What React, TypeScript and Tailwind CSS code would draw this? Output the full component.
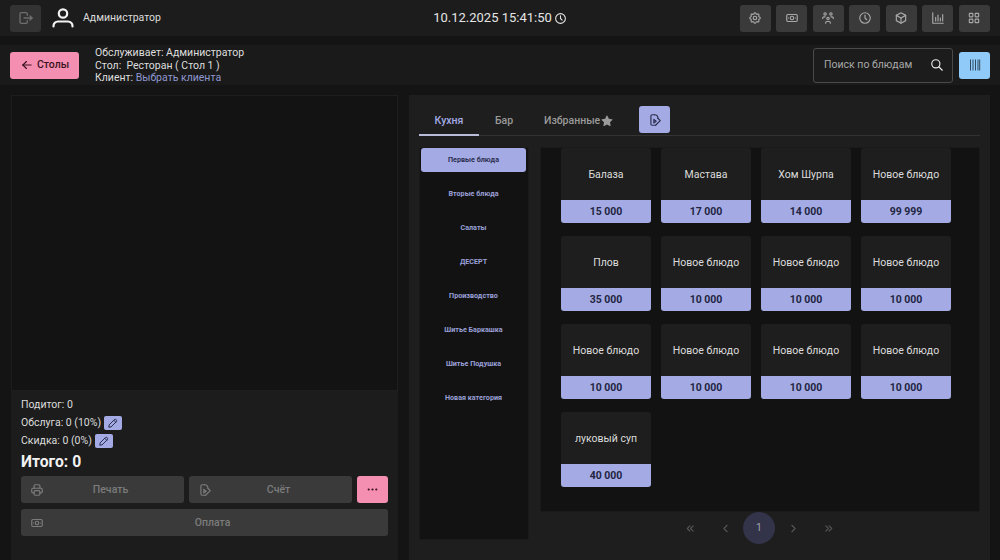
import { TbLogout, TbArrowLeft, TbSettings, TbCashBanknote, TbUsersGroup, TbClock, TbBox, TbLayoutGrid, TbSearch, TbPencil, TbPrinter, TbDots, TbStarFilled, TbChevronsLeft, TbChevronLeft, TbChevronRight, TbChevronsRight } from "react-icons/tb";

const Bill = ({ size = 16 }: { size?: number }) => (
  <svg width={size} height={size} viewBox="0 0 24 24" fill="none" stroke="currentColor" strokeWidth="2" strokeLinecap="round" strokeLinejoin="round">
    <path d="M11 3H7a2 2 0 0 0-2 2v14a2 2 0 0 0 2 2h6" />
    <path d="M11 3a6 6 0 0 1 6 6" />
    <path d="M17 9l4 4-8 8" />
    <path d="M10 11l4 3-4 3z" />
  </svg>
);

const Barcode = () => (
  <svg width="16" height="16" viewBox="0 0 16 16" stroke="currentColor" strokeWidth="1">
    <path d="M3.5 2.5v11M6 2.5v11M8.5 2.5v11M11 2.5v11M12.7 2.5v11" />
  </svg>
);

const Chart = ({ size = 14 }: { size?: number }) => (
  <svg width={size} height={size} viewBox="0 0 24 24" fill="none" stroke="currentColor" strokeWidth="2" strokeLinecap="round" strokeLinejoin="round">
    <path d="M3 3v18h18" />
    <path d="M8 17v-6M12 17V7M16 17v-5M20 17V6" />
  </svg>
);

const UserIcon = () => (
  <svg width="22" height="20" viewBox="0 0 22 20" fill="none" stroke="currentColor" strokeWidth="2.2" strokeLinecap="round">
    <circle cx="11" cy="5.5" r="4.2" />
    <path d="M1.5 18.5v-.5a4.5 4.5 0 0 1 4.5-4.5h10a4.5 4.5 0 0 1 4.5 4.5v.5" />
  </svg>
);

const topIcons = [TbSettings, TbCashBanknote, TbUsersGroup, TbClock, TbBox, Chart, TbLayoutGrid];
const categories = ["Первые блюда", "Вторые блюда", "Салаты", "ДЕСЕРТ", "Производство", "Шитье Баркашка", "Шитье Подушка", "Новая категория"];
const dishes: [string, string][] = [
  ["Балаза", "15 000"], ["Мастава", "17 000"], ["Хом Шурпа", "14 000"], ["Новое блюдо", "99 999"],
  ["Плов", "35 000"], ["Новое блюдо", "10 000"], ["Новое блюдо", "10 000"], ["Новое блюдо", "10 000"],
  ["Новое блюдо", "10 000"], ["Новое блюдо", "10 000"], ["Новое блюдо", "10 000"], ["Новое блюдо", "10 000"],
  ["луковый суп", "40 000"],
];

export default function App() {
  return (
    <div className="h-[560px] w-[1000px] overflow-hidden bg-[#141414] text-[#e0e0e0] font-['Roboto',sans-serif]">
      <header className="flex h-[36px] items-center justify-between bg-[#1c1c1c] pl-[10px] pr-[10px]">
        <div className="flex w-[260px] items-center">
          <div className="flex h-[27px] w-[31px] items-center justify-center rounded-[3px] bg-[#333333] text-[#6e6e6e]"><TbLogout size={16} /></div>
          <span className="ml-[11px] text-[#f2f2f2]"><UserIcon /></span>
          <span className="ml-[9px] text-[10.5px] text-[#dcdcdc]">Администратор</span>
        </div>
        <div className="flex items-center gap-[2px] text-[13px] text-[#e4e4e4]">10.12.2025 15:41:50<TbClock size={13} /></div>
        <div className="flex w-[260px] justify-end gap-[5.5px]">
          {topIcons.map((Icon, i) => (
            <div key={i} className="flex h-[27px] w-[31px] items-center justify-center rounded-[3px] bg-[#3a3a3a] text-[#a8a8a8]"><Icon size={14} /></div>
          ))}
        </div>
      </header>

      <div className="mt-[9px] flex h-[40px] items-center bg-[#1a1a1a] pl-[10px] pr-[10px]">
        <button className="flex h-[27px] w-[69px] items-center justify-center gap-[3px] rounded-[3px] bg-[#f48fb1] text-[10.5px] font-medium text-[#3a1220]"><TbArrowLeft size={14} />Столы</button>
        <div className="ml-[16px] pt-[2px] text-[10.5px] leading-[12.5px] text-[#dedede]">
          <div>Обслуживает: Администратор</div>
          <div>Стол:&nbsp; Ресторан ( Стол 1 )</div>
          <div>Клиент: <span className="text-[#8f97cf]">Выбрать клиента</span></div>
        </div>
        <div className="ml-auto flex h-[35px] w-[140px] items-center justify-between rounded-[3px] border border-[#4a4a4a] bg-[#1c1c1c] pl-[10px] pr-[8px] text-[10.5px] text-[#a8a8a8]">
          Поиск по блюдам<TbSearch size={14} className="text-[#e8e8e8]" />
        </div>
        <div className="ml-[6px] flex h-[27px] w-[31px] items-center justify-center rounded-[3px] bg-[#90caf9] text-[#2f4a60]"><Barcode /></div>
      </div>

      <main className="mt-[10px] flex gap-[11px] pl-[11px] pr-[10px]">
        <section className="flex h-[465px] w-[387px] flex-col bg-[#1c1c1c]">
          <div className="h-[296px] border border-[#1e1e1e] bg-[#131313]" />
          <div className="pl-[10px] pr-[10px] pt-[5px] text-[10.5px] text-[#dcdcdc]">
            <div className="flex h-[18px] items-center">Подитог: 0</div>
            <div className="flex h-[18px] items-center gap-[3px]">Обслуга: 0 (10%)
              <span className="flex h-[14px] w-[18px] items-center justify-center rounded-[2px] bg-[#a4abe4] text-[#2c2f50]"><TbPencil size={12} /></span>
            </div>
            <div className="flex h-[18px] items-center gap-[3px]">Скидка: 0 (0%)
              <span className="flex h-[14px] w-[18px] items-center justify-center rounded-[2px] bg-[#a4abe4] text-[#2c2f50]"><TbPencil size={12} /></span>
            </div>
            <div className="mt-[1px] text-[15.7px] font-bold leading-[22px] text-[#f2f2f2]">Итого: 0</div>
            <div className="mt-[3px] flex gap-[5px]">
              <button className="relative flex h-[27px] flex-1 items-center justify-center rounded-[3px] bg-[#3a3a3a] pl-[16px] text-[10.5px] font-medium text-[#7c7c7c]">
                <TbPrinter size={14} className="absolute left-[9px]" />Печать
              </button>
              <button className="relative flex h-[27px] flex-1 items-center justify-center rounded-[3px] bg-[#3a3a3a] pl-[16px] text-[10.5px] font-medium text-[#7c7c7c]">
                <span className="absolute left-[9px]"><Bill size={14} /></span>Счёт
              </button>
              <button className="flex h-[27px] w-[31px] shrink-0 items-center justify-center rounded-[3px] bg-[#f48fb1] text-[#3a1220]"><TbDots size={13} /></button>
            </div>
            <button className="relative mt-[6px] flex h-[27px] w-full items-center justify-center rounded-[3px] bg-[#3a3a3a] pl-[16px] text-[10.5px] font-medium text-[#7c7c7c]">
              <TbCashBanknote size={14} className="absolute left-[9px]" />Оплата
            </button>
          </div>
        </section>

        <section className="h-[465px] w-[581px] bg-[#1e1e1e] pl-[10px] pr-[10px] pt-[11px]">
          <div className="flex h-[30px] items-center border-b border-[#333333] text-[10.5px] font-medium">
            <div className="flex h-[30px] w-[60px] items-center justify-center border-b-2 border-[#b8bcd8] pt-[2px] text-[#a4abe4]">Кухня</div>
            <div className="ml-[6px] w-[38px] pt-[1px] text-center text-[#9a9a9a]">Бар</div>
            <div className="ml-[21px] flex items-center gap-[1px] pt-[1px] text-[#9a9a9a]">Избранные<TbStarFilled size={12} /></div>
            <div className="ml-[26px] mb-[2px] flex h-[27px] w-[31px] items-center justify-center rounded-[3px] bg-[#a4abe4] text-[#2c2f50]"><Bill size={14} /></div>
          </div>
          <div className="mt-[11px] flex gap-[11px]">
            <div className="flex h-[393px] w-[110px] flex-col gap-[10px] border border-[#1a1a1a] bg-[#121212] pl-[1px] pr-[2px]">
              {categories.map((c, i) => (
                <div key={c} className={`flex h-[24px] shrink-0 items-center justify-center rounded-[3px] pt-[1px] text-[7.2px] font-bold ${i === 0 ? "bg-[#a4abe4] text-[#2c2f50]" : "text-[#9aa0d8]"}`}>{c}</div>
              ))}
            </div>
            <div className="flex-1">
              <div className="grid h-[365px] grid-cols-[repeat(4,90px)] content-start gap-x-[10px] gap-y-[13px] border border-[#1a1a1a] bg-[#121212] pl-[20px]">
                {dishes.map(([name, price], i) => (
                  <div key={i} className="flex h-[75px] flex-col overflow-hidden rounded-[3px] bg-[#1e1e1e]">
                    <div className="flex h-[52px] items-center justify-center pt-[1px] text-[10.5px] text-[#dcdcdc]">{name}</div>
                    <div className="flex h-[23px] items-center justify-center bg-[#a4abe4] text-[10.5px] font-bold text-[#232542]">{price}</div>
                  </div>
                ))}
              </div>
              <div className="flex h-[32px] items-center justify-center gap-[1px] pr-[2px] text-[#555555]">
                <span className="flex w-[34px] justify-center"><TbChevronsLeft size={13} /></span>
                <span className="flex w-[34px] justify-center"><TbChevronLeft size={13} /></span>
                <span className="flex h-[32px] w-[32px] items-center justify-center rounded-full bg-[#33344a] text-[10.5px] text-[#a0a0a8]">1</span>
                <span className="flex w-[34px] justify-center"><TbChevronRight size={13} /></span>
                <span className="flex w-[34px] justify-center"><TbChevronsRight size={13} /></span>
              </div>
            </div>
          </div>
        </section>
      </main>
    </div>
  );
}
